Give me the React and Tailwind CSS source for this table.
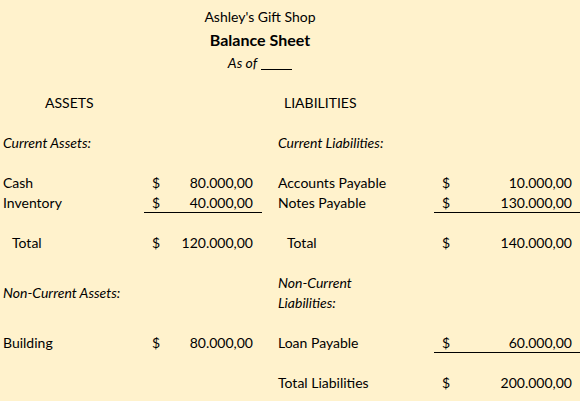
import React from "react";

const rowH = "h-[20px] flex items-center";

function Money({ amount, underline }) {
  return (
    <div className={`${rowH} justify-between pl-[8px] pr-[9px] ${underline ? "border-b border-black" : ""}`}>
      <span>$</span>
      <span>{amount}</span>
    </div>
  );
}

function MoneyR({ amount, underline }) {
  return (
    <div className={`${rowH} justify-between pl-[8px] pr-[8px] ${underline ? "border-b border-black" : ""}`}>
      <span>$</span>
      <span>{amount}</span>
    </div>
  );
}

const Empty = () => <div className="h-[20px]" />;

export default function App() {
  return (
    <div
      className="w-[580px] h-[401px] overflow-hidden bg-[#FFF2CC] text-black text-[14px] leading-[20px]"
      style={{ fontFamily: "Lato, 'Open Sans', sans-serif" }}
    >
      {/* Header */}
      <div className="w-[520px] text-center pt-[7px]">
        <div className="h-[20px]">Ashley's Gift Shop</div>
        <div className="h-[26px] flex items-center justify-center font-bold text-[16px]">Balance Sheet</div>
        <div className="h-[20px] flex items-center justify-center italic">
          <span>As of</span>
          <span className="inline-block w-[31px] h-[14px] ml-[4px] border-b border-black" />
        </div>
      </div>

      <div className="grid grid-cols-[144px_118px_13px_159px_146px] mt-[20px]">
        {/* ASSETS / LIABILITIES */}
        <div className={`${rowH} pl-[45px]`}>ASSETS</div>
        <Empty />
        <Empty />
        <div className={`${rowH} pl-[9px]`}>LIABILITIES</div>
        <Empty />

        <Empty /><Empty /><Empty /><Empty /><Empty />

        <div className={`${rowH} pl-[3px] italic`}>Current Assets:</div>
        <Empty />
        <Empty />
        <div className={`${rowH} pl-[3px] italic`}>Current Liabilities:</div>
        <Empty />

        <Empty /><Empty /><Empty /><Empty /><Empty />

        <div className={`${rowH} pl-[3px]`}>Cash</div>
        <Money amount="80.000,00" />
        <Empty />
        <div className={`${rowH} pl-[3px]`}>Accounts Payable</div>
        <MoneyR amount="10.000,00" />

        <div className={`${rowH} pl-[3px]`}>Inventory</div>
        <Money amount="40.000,00" underline />
        <Empty />
        <div className={`${rowH} pl-[3px]`}>Notes Payable</div>
        <MoneyR amount="130.000,00" underline />

        <Empty /><Empty /><Empty /><Empty /><Empty />

        <div className={`${rowH} pl-[12px]`}>Total</div>
        <Money amount="120.000,00" />
        <Empty />
        <div className={`${rowH} pl-[12px]`}>Total</div>
        <MoneyR amount="140.000,00" />

        <Empty /><Empty /><Empty /><Empty /><Empty />

        <div className="h-[40px] flex items-center pl-[3px] italic">Non-Current Assets:</div>
        <div className="h-[40px]" />
        <div className="h-[40px]" />
        <div className="h-[40px] pl-[3px] italic">
          Non-Current
          <br />
          Liabilities:
        </div>
        <div className="h-[40px]" />

        <Empty /><Empty /><Empty /><Empty /><Empty />

        <div className={`${rowH} pl-[3px]`}>Building</div>
        <Money amount="80.000,00" />
        <Empty />
        <div className={`${rowH} pl-[3px]`}>Loan Payable</div>
        <MoneyR amount="60.000,00" underline />

        <Empty /><Empty /><Empty /><Empty /><Empty />

        <Empty />
        <Empty />
        <Empty />
        <div className={`${rowH} pl-[3px]`}>Total Liabilities</div>
        <MoneyR amount="200.000,00" />
      </div>
    </div>
  );
}
